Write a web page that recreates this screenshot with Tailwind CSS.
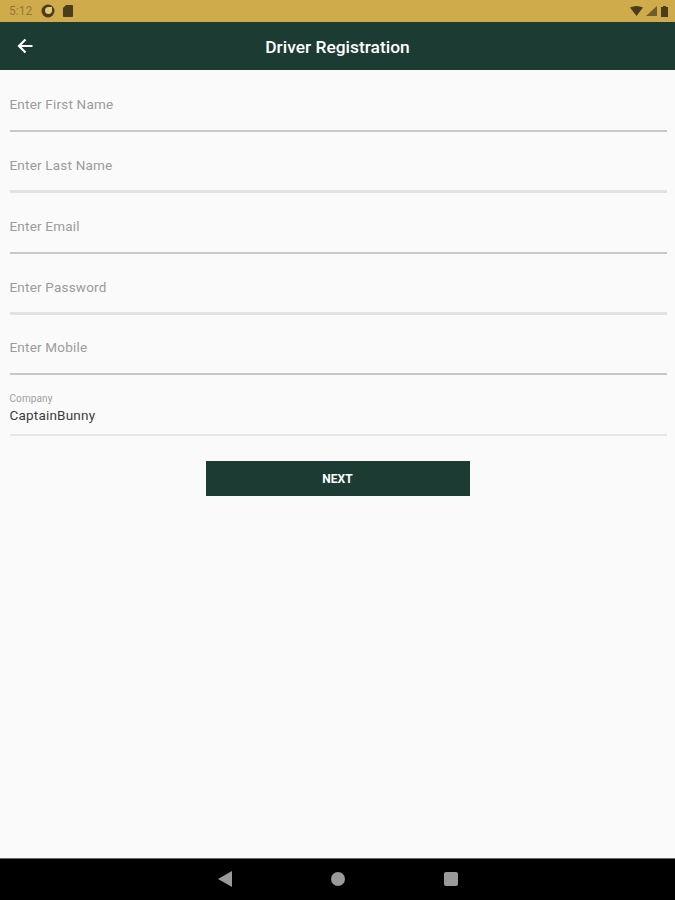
<!DOCTYPE html>
<html lang="en">
<head>
  <meta charset="UTF-8" />
  <title>Driver Registration</title>
  <script src="https://cdn.jsdelivr.net/npm/@tailwindcss/browser@4"></script>
</head>
<body class="bg-[#fafafa] font-['Roboto',sans-serif]">
  <div class="flex flex-col h-[900px] w-[675px] overflow-hidden">
    <!-- Status bar -->
    <div class="flex items-center justify-between h-[22px] bg-[#d0ab4c] pl-[9px] pr-[7px] text-[#8f7a3a]">
      <div class="flex items-center">
        <span class="text-[12px] w-[32px]">5:12</span>
        <svg class="w-[14px] h-[14px] mr-[8px]" viewBox="0 0 14 14">
          <circle cx="7" cy="7" r="6.5" fill="#4a3d1c" />
          <path d="M7 3h4v4a3.500 3.500 0 1 1-4-4z" fill="#e3c677" />
        </svg>
        <svg class="w-[10px] h-[12px]" viewBox="0 0 10 12">
          <path d="M3 0h6a1 1 0 0 1 1 1v10a1 1 0 0 1-1 1H1a1 1 0 0 1-1-1V3z" fill="#4a3d1c" />
        </svg>
      </div>
      <div class="flex items-center gap-[3px]">
        <svg class="w-[13px] h-[10px]" viewBox="0 0 13 10"><path d="M0 1.500Q6.500-1.500 13 1.500L6.500 10z" fill="#4a3d1c" /></svg>
        <svg class="w-[11px] h-[10px]" viewBox="0 0 11 10"><path d="M11 0v10H0z" fill="#6f5e2b" /></svg>
        <svg class="w-[7px] h-[11px] ml-[1px]" viewBox="0 0 7 11"><path d="M2 0h3v1h2v10H0V1h2z" fill="#4a3d1c" /></svg>
      </div>
    </div>

    <!-- App bar -->
    <header class="relative flex items-center justify-center h-[48px] pt-[2px] bg-[#1c3b33] text-white">
      <svg class="absolute left-[17px] top-[16px] w-[16px] h-[16px]" viewBox="0 0 16 16" fill="none" stroke="white" stroke-width="2.200">
        <path d="M15.500 8H2M8.500 1.500 2 8l6.500 6.500" />
      </svg>
      <h1 class="text-[17.400px] font-medium">Driver Registration</h1>
    </header>

    <!-- Form -->
    <main class="flex-1 flex flex-col pl-[9.500px] pr-[8px] pt-[26px]">
      <div class="h-[36px] border-b-2 border-[#c8c8c8] text-[13.500px] leading-[17px] text-[#9b9b9b] tracking-[0.2px]">Enter First Name</div>
      <div class="mt-[25px] h-[36px] border-b-[3px] border-[#e2e2e2] text-[13.500px] leading-[16px] text-[#9b9b9b] tracking-[0.2px]">Enter Last Name</div>
      <div class="mt-[25px] h-[36px] border-b-2 border-[#c8c8c8] text-[13.500px] leading-[16px] text-[#9b9b9b] tracking-[0.2px]">Enter Email</div>
      <div class="mt-[25px] h-[36px] border-b-[3px] border-[#e2e2e2] text-[13.500px] leading-[16px] text-[#9b9b9b] tracking-[0.2px]">Enter Password</div>
      <div class="mt-[24px] h-[36px] border-b-2 border-[#c8c8c8] text-[13.500px] leading-[17px] text-[#9b9b9b] tracking-[0.2px]">Enter Mobile</div>
      <div class="mt-[17px] h-[44px] border-b-2 border-[#e6e6e6]">
        <div class="text-[10px] leading-[13px] text-[#a0a0a0] tracking-[0.1px]">Company</div>
        <div class="mt-[2px] text-[13.500px] leading-[17px] text-[#3c3c3c] tracking-[0.2px]">CaptainBunny</div>
      </div>
      <button class="self-center mt-[25px] mr-[1.500px] w-[264px] h-[35px] bg-[#1c3b33] text-white text-[12px] font-bold">NEXT</button>
    </main>

    <!-- Nav bar -->
    <nav class="flex items-center justify-center h-[42px] pb-[1px] bg-black border-t border-[#666]">
      <svg class="w-[14px] h-[16px]" viewBox="0 0 14 16"><path d="M14 0v16L0 8z" fill="#9a9a9a" /></svg>
      <svg class="w-[14px] h-[14px] ml-[99px]" viewBox="0 0 14 14"><circle cx="7" cy="7" r="7" fill="#9a9a9a" /></svg>
      <div class="w-[14px] h-[14px] ml-[99px] rounded-[2px] bg-[#9a9a9a]"></div>
    </nav>
  </div>
</body>
</html>
